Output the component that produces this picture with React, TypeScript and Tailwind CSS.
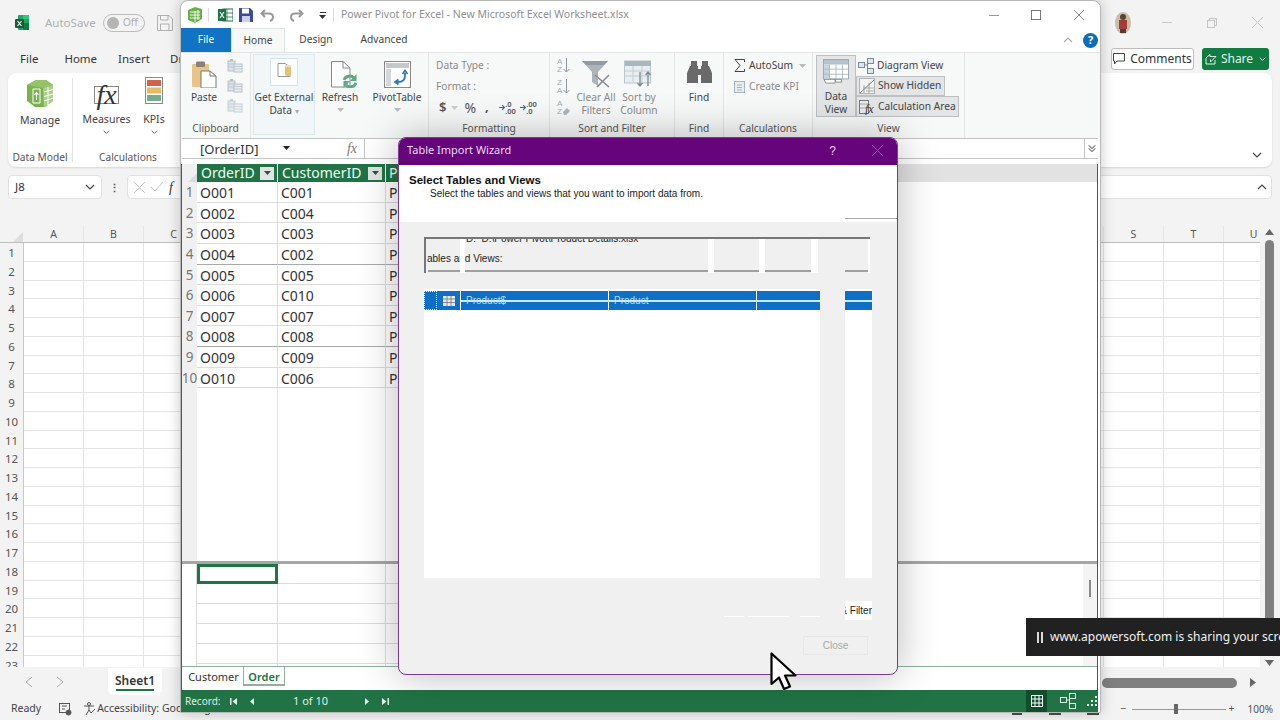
import React from "react";

const cols = ["A","B","C","D","E","F","G","H","I","J","K","L","M","N","O","P","Q","R","S","T","U"];
const rows = Array.from({ length: 23 }, (_, i) => i + 1);
const data = [
  ["O001","C001"],["O002","C004"],["O003","C003"],["O004","C002"],["O005","C005"],
  ["O006","C010"],["O007","C007"],["O008","C008"],["O009","C009"],["O010","C006"],
];
const ui = "font-['Noto_Sans','Open_Sans',sans-serif]";
const serif = "font-['Liberation_Serif',serif]";

function Chevron({ up, className = "" }: { up?: boolean; className?: string }) {
  return (
    <svg width="10" height="6" viewBox="0 0 10 6" className={className} fill="none" stroke="currentColor" strokeWidth="1.2">
      <path d={up ? "M1 5 L5 1 L9 5" : "M1 1 L5 5 L9 1"} />
    </svg>
  );
}

function Caret({ color = "#9a9a9a" }: { color?: string }) {
  return (
    <svg width="7" height="4" viewBox="0 0 7 4"><path d="M0 0 H7 L3.5 4 Z" fill={color} /></svg>
  );
}

function ExcelLogo() {
  return (
    <svg width="15" height="16" viewBox="0 0 15 16">
      <rect x="3" y="0" width="11" height="15" rx="1" fill="#21a366" />
      <rect x="8" y="0" width="6" height="4" fill="#33c481" />
      <rect x="8" y="8" width="6" height="7" fill="#107c41" />
      <rect x="0" y="4" width="9" height="9" rx="1" fill="#185c37" />
      <path d="M2.5 6 L6.5 11 M6.5 6 L2.5 11" stroke="#fff" strokeWidth="1.1" />
    </svg>
  );
}

function ManageIcon() {
  return (
    <svg width="28" height="27" viewBox="0 0 28 27">
      <path d="M1 5 L10 0 L20 0 L27 5 V21 L19 27 H9 L1 21 Z" fill="#7bb24f" />
      <path d="M1 5 L10 0 L20 0 L27 5 L17 8 Z" fill="#93c468" />
      <path d="M17 8 L27 5 V21 L18 27 Z" fill="#a9d188" />
      <path d="M18 12 L27 9.5 M18 16.5 L27 14 M18 21 L27 18 M22 7 V25 M7 9 H14 V23 H7 Z" stroke="#fff" strokeWidth="1" fill="none" />
      <path d="M10.5 20 V13 M8.5 15 L10.5 12.5 L12.5 15" stroke="#fff" strokeWidth="1.1" fill="none" />
    </svg>
  );
}

function KpiIcon() {
  return (
    <svg width="18" height="27" viewBox="0 0 18 27">
      <rect x="0.5" y="0.5" width="17" height="26" fill="#fff" stroke="#8a8a8a" />
      <rect x="2" y="3" width="14" height="6" fill="#d0614a" />
      <rect x="2" y="10.5" width="14" height="6" fill="#e6bb63" />
      <rect x="2" y="18" width="14" height="6" fill="#77ad8d" />
    </svg>
  );
}

function PPLogo() {
  return (
    <svg width="16" height="16" viewBox="0 0 16 16">
      <path d="M1 3 L8 0 L15 2 V12 L8 16 L1 13 Z" fill="#68b04a" />
      <path d="M8 4 V15 M11 3 V13 M3 5 H13 M3 8 H13 M3 11 H13" stroke="#fff" strokeWidth="0.9" />
    </svg>
  );
}

function SmallExcel() {
  return (
    <svg width="15" height="14" viewBox="0 0 15 14">
      <rect x="5" y="1" width="10" height="12" fill="#fff" stroke="#1e7145" />
      <path d="M9 1 V13 M5 5 H15 M5 9 H15" stroke="#1e7145" strokeWidth="0.8" />
      <rect x="0" y="1" width="8" height="12" fill="#1e7145" />
      <path d="M2 4 L6 10 M6 4 L2 10" stroke="#fff" strokeWidth="1.1" />
    </svg>
  );
}

function SaveIcon() {
  return (
    <svg width="14" height="14" viewBox="0 0 14 14">
      <path d="M0 0 H11 L14 3 V14 H0 Z" fill="#3b4aa0" />
      <rect x="3" y="0.5" width="7" height="5" fill="#fff" />
      <rect x="3" y="8" width="8" height="6" fill="#cfd3ea" />
    </svg>
  );
}

function Arrow({ flip }: { flip?: boolean }) {
  return (
    <svg width="15" height="13" viewBox="0 0 15 13" fill="none" stroke="#9a9a9a" strokeWidth="2" className={flip ? "-scale-x-100" : ""}>
      <path d="M5 1 L1.5 4.5 L5 8 M2 4.5 H9 Q13 4.5 13 8 Q13 11 10 12" />
    </svg>
  );
}

function PasteIcon() {
  return (
    <svg width="25" height="27" viewBox="0 0 25 27">
      <rect x="0" y="3" width="17" height="23" rx="1" fill="#e9c388" />
      <rect x="4" y="0.5" width="9" height="5.5" rx="1" fill="#8b8073" />
      <path d="M9 10 H18 L24 15 V27 H9 Z" fill="#fff" stroke="#777" />
      <path d="M18 10 V15 H24" fill="none" stroke="#777" />
    </svg>
  );
}

function TinyClip({ faded }: { faded?: boolean }) {
  return (
    <svg width="16" height="15" viewBox="0 0 16 15" className={faded ? "opacity-60" : "opacity-80"}>
      <rect x="1" y="3" width="7" height="10" fill="#d6dde3" stroke="#a8b4be" />
      <rect x="7" y="6" width="8" height="8" fill="#e6ebef" stroke="#a8b4be" />
      <rect x="3" y="1" width="3" height="2" fill="#a8b4be" />
      <path d="M7 8.5 H15 M7 11 H15 M1 6 H8 M1 9 H7" stroke="#a8b4be" strokeWidth="0.8" />
    </svg>
  );
}

function ExternalIcon() {
  return (
    <svg width="28" height="28" viewBox="0 0 28 28">
      <rect x="0.5" y="0.5" width="27" height="27" fill="#fbfcfc" stroke="#d5e4ea" />
      <path d="M8 5.5 H15 L20 9 V18.5 H8 Z" fill="#fff" stroke="#999" />
      <rect x="15" y="7" width="6" height="11" rx="2.5" fill="#e8c172" />
      <ellipse cx="18" cy="8" rx="3" ry="1.3" fill="#f4dea8" />
    </svg>
  );
}

function RefreshIcon() {
  return (
    <svg width="26" height="27" viewBox="0 0 26 27">
      <path d="M0.5 0.5 H12 L19 7 V26 H0.5 Z" fill="#fff" stroke="#888" />
      <path d="M12 0.5 V7 H19" fill="none" stroke="#888" />
      <path d="M13 19 A6 6 0 0 1 23 17 M25 22 A6 6 0 0 1 15 24" fill="none" stroke="#5eaa88" strokeWidth="3" />
      <path d="M25.5 13 V20 H19 Z M12.5 27 V20 H19 Z" fill="#5eaa88" />
    </svg>
  );
}

function PivotIcon() {
  return (
    <svg width="27" height="27" viewBox="0 0 27 27">
      <rect x="0.5" y="0.5" width="26" height="26" fill="#fff" stroke="#888" />
      <rect x="2" y="2" width="23" height="5" fill="#c6c9cc" />
      <rect x="2" y="8" width="5" height="17" fill="#d5d8da" />
      <path d="M21 12 V15 Q21 21 14 21 H12 M18.5 13 L21 9.5 L23.5 13 M14.5 18.5 L11 21 L14.5 23.5" fill="none" stroke="#2f79bd" strokeWidth="1.8" />
    </svg>
  );
}

function SortAZ({ a, b, eraser }: { a: string; b: string; eraser?: boolean }) {
  return (
    <div className="flex items-center h-[21px] gap-[1px]">
      <div className="flex flex-col text-[8px] leading-[7.5px] text-[#a2aab0] font-['Liberation_Sans',sans-serif]">
        <span>{a}</span>
        <span>{b}</span>
      </div>
      {eraser ? (
        <svg width="7" height="7" viewBox="0 0 7 7" className="mt-[7px]"><path d="M0 4 L4 0 L7 3 L3 7 H1 Z" fill="#aeb6bc" /></svg>
      ) : (
        <svg width="7" height="15" viewBox="0 0 7 15" fill="none" stroke="#8d959b" strokeWidth="1">
          <path d="M3.5 0 V14 M0.5 11 L3.5 14 L6.5 11" />
        </svg>
      )}
    </div>
  );
}

function FilterIcon() {
  return (
    <svg width="28" height="28" viewBox="0 0 28 28">
      <path d="M0 1 H26 L16 12 V26 L10 22 V12 Z" fill="#adb4b9" />
      <path d="M0 1 H26 L22 5 H4 Z" fill="#939ba1" />
      <path d="M13 15 L27 27 M27 15 L15 27" stroke="#868e94" strokeWidth="1.6" />
    </svg>
  );
}

function SortColIcon() {
  return (
    <svg width="30" height="28" viewBox="0 0 30 28">
      <rect x="0.5" y="1" width="26" height="22" fill="#e8eef2" stroke="#b9c4cc" />
      <rect x="1" y="1" width="26" height="5" fill="#a9b7c1" />
      <path d="M9 6 V23 M18 6 V23 M1 11 H27 M1 16 H27" stroke="#c4ced5" />
      <path d="M16 12 V26 M13.5 23 L16 26 L18.5 23 M24 26 V12 M21.5 15 L24 12 L26.5 15" stroke="#7d8a94" fill="none" strokeWidth="1.3" />
    </svg>
  );
}

function BinocularIcon() {
  return (
    <svg width="25" height="23" viewBox="0 0 25 23" fill="#6a6a6a">
      <rect x="4" y="0" width="6" height="5" />
      <rect x="15" y="0" width="6" height="5" />
      <path d="M3 5 H11 V22 H0 V12 Z" />
      <path d="M14 5 H22 L25 12 V22 H14 Z" />
      <rect x="11" y="8" width="3" height="6" />
    </svg>
  );
}

function DataViewIcon() {
  return (
    <svg width="28" height="27" viewBox="0 0 28 27">
      <rect x="0.5" y="0.5" width="27" height="21" fill="#fff" stroke="#9aa4ab" />
      <rect x="1" y="1" width="26" height="5" fill="#b5c3ce" />
      <rect x="1" y="6" width="6" height="16" fill="#c9d5de" />
      <path d="M7 6 V22 M14 6 V22 M21 6 V22 M1 11 H27 M1 16.5 H27" stroke="#aeb9c1" />
      <path d="M1 22 H13 V26 H3 Z M13 22 H20 V25 H14 Z" fill="#fff" stroke="#8a8a8a" />
    </svg>
  );
}

function DiagramIcon({ light }: { light?: boolean }) {
  const s = light ? "#d9efe2" : "#7a8a96";
  const f = light ? "transparent" : "#dbe6ee";
  return (
    <svg width="16" height="16" viewBox="0 0 16 16" fill={f} stroke={s}>
      <rect x="0.5" y="4.5" width="6" height="5" />
      <rect x="9.5" y="0.5" width="6" height="5" />
      <rect x="9.5" y="10.5" width="6" height="5" />
      <path d="M6.5 7 H9.5 M9.5 3 V13" fill="none" />
    </svg>
  );
}

function HiddenIcon() {
  return (
    <svg width="16" height="16" viewBox="0 0 16 16">
      <rect x="0.5" y="0.5" width="15" height="15" fill="#f2f3f4" stroke="#777" strokeDasharray="1 1" />
      <path d="M1 15 L15 2" stroke="#777" />
      <path d="M5 7 V15 M10 5 V15 M4 10 H15 M7 13 H15" stroke="#999" strokeWidth="0.8" />
    </svg>
  );
}

function CalcIcon() {
  return (
    <svg width="16" height="16" viewBox="0 0 16 16">
      <rect x="0.5" y="1.5" width="9" height="13" fill="#e6ebef" stroke="#777" />
      <path d="M0.5 5 H9 M0.5 9 H7" stroke="#999" strokeWidth="0.8" />
      <text x="6" y="14" fontSize="12" fontStyle="italic" fontFamily="Liberation Serif, serif" fill="#333">fx</text>
    </svg>
  );
}

function Cursor() {
  return (
    <svg width="28" height="40" viewBox="0 0 28 40">
      <path d="M1.5 1.5 L1.5 32 L9 25.5 L14 37 L20 34.5 L15 23.5 L25.5 23.5 Z" fill="#fff" stroke="#000" strokeWidth="2.2" strokeLinejoin="round" />
    </svg>
  );
}

function Big({ icon, label, caret, className = "", iconClass = "" }: { icon: React.ReactNode; label: React.ReactNode; caret?: boolean; className?: string; iconClass?: string }) {
  return (
    <div className={`flex flex-col items-center ${className}`}>
      <div className={`h-[35px] flex items-end justify-center ${iconClass}`}>{icon}</div>
      <div className="mt-[3px] text-center leading-[13px] text-[10.2px] text-[#444] whitespace-nowrap">{label}</div>
      {caret && <div className="mt-[4px]"><Caret color="#bbb" /></div>}
    </div>
  );
}

function Group({ w, label, children }: { w: string; label?: string; children: React.ReactNode }) {
  return (
    <div className={`${w} h-full flex flex-col border-r border-[#e2e5e6]`}>
      <div className="flex-1 flex min-h-0">{children}</div>
      <div className="h-[14px] text-center text-[10.2px] leading-[14px] text-[#555] shrink-0 mb-[3px]">{label}</div>
    </div>
  );
}

function Decimal({ top, bottom }: { top: string; bottom: string }) {
  return (
    <div className="flex items-center w-[17px]">
      <svg width="7" height="7" viewBox="0 0 7 7" fill="none" stroke="#2f6ea8" strokeWidth="1.2"><path d="M0 3.5 H6 M3.5 1 L6 3.5 L3.5 6" /></svg>
      <span className="text-[7.5px] leading-[7px] font-semibold text-[#555]">{top}<br />{bottom}</span>
    </div>
  );
}

function PowerPivot() {
  return (
    <div className={`absolute left-[180px] top-0 w-[921px] h-[713px] bg-white rounded-t-lg border border-[#b8b8b8] flex flex-col shadow-[0_0_14px_rgba(0,0,0,0.22)] ${ui}`}>
      {/* title bar */}
      <div className="h-[27px] shrink-0 flex items-center pl-[6px] pr-[15px] pt-[1px]">
        <PPLogo />
        <div className="w-px h-[14px] bg-[#ddd] ml-[5px] mr-[9px]" />
        <SmallExcel />
        <div className="ml-[6px]"><SaveIcon /></div>
        <div className="ml-[7px]"><Arrow /></div>
        <div className="ml-[14px]"><Arrow flip /></div>
        <div className="ml-[15px] flex flex-col items-center gap-[2px]">
          <div className="w-[6px] h-[1px] bg-[#333]" />
          <Caret color="#333" />
        </div>
        <div className="w-px h-[14px] bg-[#ddd] ml-[7px] mr-[7px]" />
        <div className="text-[10.5px] text-[#8f8f8f] whitespace-nowrap">Power Pivot for Excel - New Microsoft Excel Worksheet.xlsx</div>
        <div className="ml-auto flex items-center gap-[31px] text-[#888]">
          <div className="w-[10px] h-px bg-[#999]" />
          <div className="w-[10px] h-[10px] border border-[#777] ml-[1px]" />
          <svg width="12" height="12" viewBox="0 0 12 12" stroke="#888" className="ml-[1px]"><path d="M1 1 L11 11 M11 1 L1 11" /></svg>
        </div>
      </div>
      {/* tabs */}
      <div className="h-[24px] shrink-0 flex items-stretch text-[10.2px] text-[#444]">
        <div className="w-[50px] bg-[#1272c4] text-white flex items-center justify-center">File</div>
        <div className="w-[54px] flex items-center justify-center bg-[#f7f8f8] border-x border-t border-[#dfe3e5]">Home</div>
        <div className="w-[62px] flex items-center justify-center">Design</div>
        <div className="w-[74px] flex items-center justify-center">Advanced</div>
        <div className="ml-auto flex items-center gap-[10px] pr-[2px] text-[#aaa]">
          <Chevron up />
          <div className="w-[15px] h-[15px] rounded-full bg-[#0f6cbd] text-white text-[11px] font-bold flex items-center justify-center">?</div>
        </div>
      </div>
      {/* ribbon */}
      <div className="h-[86px] shrink-0 bg-[#f7f8f8] border-t border-[#e2e5e6] flex">
        <Group w="w-[70px]" label="Clipboard">
          <Big icon={<PasteIcon />} label="Paste" className="w-[46px]" />
          <div className="mt-[5px] flex flex-col gap-[5px]"><TinyClip /><TinyClip /><TinyClip faded /></div>
        </Group>
        <Group w="w-[178px]">
          <div className="w-[62px] h-[81px] ml-[2px] mt-[1px] bg-[#f1f6f8] border border-[#dde8ec] flex flex-col items-center pt-[3px] shrink-0">
            <ExternalIcon />
            <div className="mt-[5px] text-center leading-[13px] text-[10.2px] text-[#444] whitespace-nowrap">
              Get External<br />Data <span className="text-[#aaa] text-[8px]">▾</span>
            </div>
          </div>
          <Big icon={<div className="ml-[8px]"><RefreshIcon /></div>} label="Refresh" caret className="w-[50px] shrink-0" />
          <Big icon={<PivotIcon />} label="PivotTable" caret className="w-[64px] shrink-0" />
        </Group>
        <Group w="w-[121px]" label="Formatting">
          <div className="pl-[7px] mt-[2px] text-[10.2px] text-[#8a8a8a] flex flex-col">
            <div className="h-[21px] flex items-center whitespace-nowrap">Data Type :</div>
            <div className="h-[21px] flex items-center">Format :</div>
            <div className="h-[21px] flex items-center text-[#555]">
              <span className="ml-[3px] text-[13px] font-semibold">$</span>
              <span className="ml-[5px]"><Caret color="#ccc" /></span>
              <span className="ml-[6px] text-[14px]">%</span>
              <span className="ml-[9px] text-[13px] font-bold leading-[8px] h-[12px]">,</span>
              <span className="ml-[10px]"><Decimal top=".0" bottom=".00" /></span>
              <span className="ml-[4px]"><Decimal top=".00" bottom=".0" /></span>
            </div>
          </div>
        </Group>
        <Group w="w-[125px]" label="Sort and Filter">
          <div className="ml-[7px] mt-[2px] w-[17px] shrink-0 flex flex-col"><SortAZ a="A" b="Z" /><SortAZ a="Z" b="A" /><SortAZ a="A" b="Z" eraser /></div>
          <Big icon={<FilterIcon />} label={<span className="text-[#8a8a8a]">Clear All<br />Filters</span>} className="w-[44px] shrink-0" />
          <Big icon={<SortColIcon />} label={<span className="text-[#8a8a8a]">Sort by<br />Column</span>} className="w-[42px] shrink-0" />
        </Group>
        <Group w="w-[49px]" label="Find">
          <Big icon={<BinocularIcon />} label="Find" className="w-full" iconClass="pb-[4px]" />
        </Group>
        <Group w="w-[89px]" label="Calculations">
          <div className="pl-[10px] mt-[2px] flex flex-col text-[10.2px]">
            <div className="h-[21px] flex items-center text-[#444]">
              <svg width="11" height="13" viewBox="0 0 11 13" fill="none" stroke="#444"><path d="M10.5 3 V0.5 H1 L6 6.5 L1 12.5 H10.5 V10" /></svg>
              <span className="ml-[4px] mr-[6px]">AutoSum</span><Caret color="#bbb" />
            </div>
            <div className="h-[21px] flex items-center text-[#8a8a8a]">
              <svg width="11" height="13" viewBox="0 0 11 13"><rect x="0.5" y="1.5" width="10" height="11" fill="#e8edf0" stroke="#a8b4be" /><path d="M3 5 H8 M3 7.5 H8 M3 10 H8" stroke="#a8b4be" /></svg>
              <span className="ml-[4px] whitespace-nowrap">Create KPI</span>
            </div>
          </div>
        </Group>
        <Group w="w-[152px]" label="View">
          <div className="ml-[3px] mt-[2px] w-[40px] h-[62px] shrink-0 bg-[#e3e5e6] border border-[#bdbfc0] flex flex-col items-center pt-[3px]">
            <DataViewIcon />
            <div className="mt-[6px] text-center leading-[13px] text-[10.2px] text-[#444]">Data<br />View</div>
          </div>
          <div className="mt-[3px] flex flex-col items-start text-[10.2px] text-[#444] whitespace-nowrap">
            <div className="h-[20px] flex items-center gap-[3px] pl-[2px]"><DiagramIcon />Diagram View</div>
            <div className="h-[20px] w-[89px] flex items-center gap-[3px] pl-[2px] bg-[#e3e5e6] border border-[#bdbfc0]"><HiddenIcon />Show Hidden</div>
            <div className="h-[21px] w-[103px] flex items-center gap-[3px] pl-[2px] bg-[#e3e5e6] border border-[#bdbfc0]"><CalcIcon />Calculation Area</div>
          </div>
        </Group>
      </div>
      {/* formula bar */}
      <div className="h-[21px] shrink-0 flex items-stretch border-y border-[#c4c4c4] ml-px mr-[2px] bg-white">
        <div className="w-[108px] pl-[18px] flex items-center justify-between text-[13px] text-[#333] shrink-0 leading-[18px]">
          [OrderID]<span className="mb-[1px]"><Caret color="#222" /></span>
        </div>
        <div className="w-[55px] shrink-0" />
        <div className={`w-[14px] shrink-0 flex items-center justify-center italic text-[14px] text-[#777] ${serif}`}>fx</div>
        <div className="ml-[5px] w-[1px] bg-[#c4c4c4]" />
        <div className="flex-1" />
        <div className="w-[14px] border-l border-[#c4c4c4] flex flex-col items-center justify-center -space-y-[3px]">
          <Chevron className="text-[#222] w-[8px]" />
          <Chevron className="text-[#222] w-[8px]" />
        </div>
      </div>
      {/* data pane */}
      <div className="flex-1 min-h-0 flex flex-col mt-[5px] mr-[2px] border-x border-[#217346] text-[14px]">
        <div className="flex h-[18px] shrink-0 leading-[18px]">
          <div className="w-[15px] bg-[#f0f0f0] flex items-end justify-end">
            <svg width="9" height="9" viewBox="0 0 9 9"><path d="M9 0 V9 H0 Z" fill="#dcdcdc" /></svg>
          </div>
          <div className="w-[81px] bg-[#217346] text-[#eafff3] flex items-center pl-[4px] border-r border-white">OrderID<span className="ml-auto mr-[3px] w-[14px] h-[13px] bg-[#dfe5e2] flex items-center justify-center"><Caret color="#444" /></span></div>
          <div className="w-[108px] bg-[#217346] text-[#eafff3] flex items-center pl-[4px] border-r border-white">CustomerID<span className="ml-auto mr-[3px] w-[14px] h-[13px] bg-[#dfe5e2] flex items-center justify-center"><Caret color="#444" /></span></div>
          <div className="flex-1 bg-[#e2e2e2] flex"><span className="w-[14px] h-full bg-[#217346] text-[#eafff3] pl-[3px]">P</span></div>
        </div>
        <div className="flex-1 min-h-0 flex flex-col">
          {data.map((r, i) => (
            <div key={r[0]} className="flex h-[20.65px] shrink-0 text-[#333] leading-[21px]">
              <div className="w-[15px] shrink-0 bg-[#f0f0f0] text-[#777] text-[13.5px] flex justify-center whitespace-nowrap">{i + 1}</div>
              <div className={`w-[81px] shrink-0 border-r border-b border-r-[#dcdcdc] pl-[3px] ${i === 3 || i === 7 ? "border-b-[#a9a9a9]" : "border-b-[#dcdcdc]"}`}>{r[0]}</div>
              <div className={`w-[108px] shrink-0 border-r border-b border-r-[#dcdcdc] pl-[3px] ${i === 3 || i === 7 ? "border-b-[#a9a9a9]" : "border-b-[#dcdcdc]"}`}>{r[1]}</div>
              <div className={`w-[14px] shrink-0 border-b pl-[3px] ${i === 3 || i === 7 ? "border-b-[#a9a9a9]" : "border-b-[#dcdcdc]"}`}>P</div>
            </div>
          ))}
          <div className="flex-1 flex">
            <div className="w-[15px] bg-[#f0f0f0]" />
            <div className="w-[81px] border-r border-[#e6e6e6]" />
            <div className="w-[108px] border-r border-[#e6e6e6]" />
          </div>
        </div>
        <div className="h-[3px] shrink-0 bg-[#a6a6a6]" />
        <div className="h-[103px] shrink-0 flex border-b border-[#8fb09e]">
          <div className="w-[15px] border-r border-[#dcdcdc]" />
          <div className="w-[81px] flex flex-col border-r border-[#dcdcdc]">
            <div className="h-[20px] border-[3px] border-[#217346] shrink-0 -mr-px" />
            {[0,1,2,3].map((k) => <div key={k} className="h-[20px] border-b border-[#dcdcdc]" />)}
          </div>
          <div className="w-[108px] flex flex-col border-r border-[#dcdcdc]">
            {[0,1,2,3,4].map((k) => <div key={k} className="h-[20px] border-b border-[#dcdcdc]" />)}
          </div>
          <div className="w-[14px] flex flex-col">
            {[0,1,2,3,4].map((k) => <div key={k} className="h-[20px] border-b border-[#dcdcdc]" />)}
          </div>
          <div className="flex-1" />
          <div className="w-[14px] bg-[#f4f4f4] flex items-start justify-center pt-[16px]">
            <div className="w-[2px] h-[17px] bg-[#8a8a8a]" />
          </div>
        </div>
        <div className="h-[23px] shrink-0 flex items-start pl-[2px] text-[11px] leading-[14px]">
          <div className="w-[60px] h-[19px] pt-[3px] text-center text-[#333] border-r border-[#8fb09e] bg-white">Customer</div>
          <div className="w-[41px] h-[19px] pt-[3px] text-center text-[#217346] font-semibold border-b-2 border-r border-[#8fb09e]">Order</div>
        </div>
      </div>
      {/* record bar */}
      <div className="h-[22px] shrink-0 bg-[#217346] flex items-center text-[#dff0e6] text-[10px] mr-[2px] pl-[4px]">
        <span className="w-[35px] whitespace-nowrap">Record:</span>
        <svg width="7" height="7" viewBox="0 0 7 7" fill="#dff0e6" className="ml-[10px]"><rect width="1.5" height="7" /><path d="M7 0 V7 L2.5 3.5 Z" /></svg>
        <svg width="4" height="7" viewBox="0 0 4 7" fill="#dff0e6" className="ml-[13px]"><path d="M4 0 V7 L0 3.5 Z" /></svg>
        <span className="ml-[39px] w-[32px] text-[11px] whitespace-nowrap">1 of 10</span>
        <svg width="4" height="7" viewBox="0 0 4 7" fill="#dff0e6" className="ml-[40px]"><path d="M0 0 V7 L4 3.5 Z" /></svg>
        <svg width="7" height="7" viewBox="0 0 7 7" fill="#dff0e6" className="ml-[13px]"><path d="M0 0 V7 L4.5 3.5 Z" /><rect x="5.5" width="1.5" height="7" /></svg>
        <div className="ml-auto flex items-center">
          <div className="w-[21px] h-[22px] bg-[#0f4d2b] flex items-center justify-center">
            <svg width="12" height="12" viewBox="0 0 12 12" fill="none" stroke="#fff" strokeWidth="1"><rect x="0.5" y="0.5" width="11" height="11" /><path d="M4 0 V12 M8 0 V12 M0 4 H12 M0 8 H12" /></svg>
          </div>
          <div className="ml-[13px]"><DiagramIcon light /></div>
          <svg width="12" height="12" viewBox="0 0 12 12" className="ml-[10px]" fill="#d9efe2"><rect x="9" y="9" width="2" height="2" /><rect x="5" y="9" width="2" height="2" /><rect x="1" y="9" width="2" height="2" /><rect x="9" y="5" width="2" height="2" /><rect x="5" y="5" width="2" height="2" /><rect x="9" y="1" width="2" height="2" /></svg>
        </div>
      </div>
    </div>
  );
}

const segments = [[2, 32], [39, 243], [286, 47], [339, 47], [419, 23]];
const strips = [[34, 5], [282, 6], [333, 6], [385, 7], [442, 3]];

function Dialog() {
  return (
    <div className="absolute left-[398px] top-[137px] w-[500px] h-[538px] bg-[#f0f0f0] rounded-t-lg rounded-b-lg border border-[#7a3b8c] overflow-hidden flex flex-col shadow-[0_0_40px_rgba(0,0,0,0.28)] font-['Liberation_Sans',sans-serif]">
      <div className="h-[27px] shrink-0 bg-[#66047c] flex items-center pl-[8px] pr-[14px] pb-[2px] text-[11px] text-[#edd9f1]">
        <span className={ui}>Table Import Wizard</span>
        <span className="ml-auto mr-[36px] text-[#f0c8f4] text-[12px]">?</span>
        <svg width="11" height="11" viewBox="0 0 11 11" stroke="#8f4ea0"><path d="M0 0 L11 11 M11 0 L0 11" /></svg>
      </div>
      <div className="h-[57px] shrink-0 bg-white relative pl-[10px] pt-[9px]">
        <div className="text-[11.5px] leading-[13px] font-bold text-[#111]">Select Tables and Views</div>
        <div className="text-[10px] leading-[13px] text-[#222] pl-[21px]">Select the tables and views that you want to import data from.</div>
        <div className="absolute right-0 bottom-[3px] w-[52px] h-px bg-[#a8a8a8]" />
      </div>
      <div className="flex-1 min-h-0 flex flex-col pl-[25px]">
        {/* source box */}
        <div className="mt-[15px] w-[446px] h-[36px] shrink-0 relative border-t-2 border-l-2 border-[#777] overflow-hidden">
          <div className="pl-[40px] -mt-[7px] text-[10px] leading-[13px] text-[#222] whitespace-nowrap">D:&nbsp; D:\Power Pivot\Product Details.xlsx</div>
          <div className="pl-[1px] mt-[7px] text-[10px] leading-[13px] text-[#222] whitespace-nowrap">ables and Views:</div>
          {segments.map(([x, w]) => (
            <div key={x} style={{ left: x, width: w }} className="absolute bottom-[1px] h-[2px] bg-[#a0a0a0]" />
          ))}
          {strips.map(([x, w]) => (
            <div key={x} style={{ left: x, width: w }} className="absolute top-0 bottom-0 bg-white" />
          ))}
        </div>
        {/* lists */}
        <div className="mt-[16px] h-[289px] flex shrink-0">
          <div className="w-[396px] bg-white pt-[2px] flex flex-col">
            <div className="h-[19px] bg-[#0f6fc6] flex text-[10px] text-[#b9dcf4] relative">
              <div className="w-[13px] border border-dotted border-white" />
              <div className="w-[24px] border-r border-white flex items-center justify-center">
                <svg width="12" height="10" viewBox="0 0 12 10" fill="#e8e8e8"><rect width="12" height="10" /><path d="M4 0 V10 M8 0 V10 M0 3 H12 M0 6.5 H12" stroke="#666" strokeWidth="0.7" /></svg>
              </div>
              <div className="w-[148px] border-r border-white pl-[5px] leading-[19px]">Product$</div>
              <div className="w-[148px] border-r border-white pl-[5px] leading-[19px]">Product</div>
              <div className="absolute left-[37px] right-0 top-[9px] h-[2px] bg-[#c7ecf6]" />
            </div>
          </div>
          <div className="w-[25px]" />
          <div className="w-[27px] bg-white pt-[2px]">
            <div className="h-[19px] bg-[#0f6fc6] relative"><div className="absolute inset-x-0 top-[9px] h-[2px] bg-[#c7ecf6]" /></div>
          </div>
        </div>
        {/* footer */}
        <div className="mt-[23px] h-[19px] shrink-0 flex items-end">
          <div className="ml-[300px] w-[20px] h-px bg-white mb-[3px]" />
          <div className="ml-[4px] w-[41px] h-px bg-white mb-[3px]" />
          <div className="ml-[11px] w-[20px] h-px bg-white mb-[3px]" />
          <div className="ml-[25px] w-[27px] h-[19px] bg-white overflow-hidden flex items-center justify-end text-[10px] whitespace-nowrap text-[#222]"><span>&amp; Filter</span></div>
        </div>
        <div className="mt-[16px] ml-[379px] w-[65px] h-[19px] shrink-0 border border-[#e8e8e8] text-[10px] text-[#a8a8a8] flex items-center justify-center">Close</div>
      </div>
    </div>
  );
}

export default function App() {
  return (
    <div className={`relative w-[1280px] h-[720px] overflow-hidden bg-[#f3f3f3] flex flex-col ${ui}`}>
      {/* Excel title bar */}
      <div className="h-[45px] shrink-0 flex items-center pl-[15px] pr-[17px] text-[11.5px] text-[#b0b0b0]">
        <ExcelLogo />
        <span className="ml-[15px]">AutoSave</span>
        <div className="ml-[7px] w-[42px] h-[18px] rounded-full border border-[#bdbdbd] flex items-center pl-[3px] gap-[4px] text-[10.5px]">
          <span className="w-[12px] h-[12px] rounded-full bg-[#b5b5b5]" />Off
        </div>
        <svg width="16" height="16" viewBox="0 0 16 16" className="ml-[12px]" fill="none" stroke="#b0b0b0"><path d="M0.5 0.5 H12 L15.5 4 V15.5 H0.5 Z M3.5 0.5 V5 H11 V0.5 M3.5 15.5 V9 H12 V15.5" /></svg>
        <div className="ml-auto flex items-center">
          <svg width="18" height="24" viewBox="0 0 18 24"><ellipse cx="9" cy="12" rx="8" ry="11" fill="#c9bfa8" /><rect x="5" y="9" width="8" height="9" fill="#a83a3a" /><rect x="6" y="18" width="6" height="4" fill="#4a4036" /><circle cx="9" cy="6" r="3" fill="#5c4334" /></svg>
          <div className="ml-[30px] w-[10px] h-px bg-[#c8c8c8]" />
          <svg width="10" height="10" viewBox="0 0 10 10" className="ml-[35px]" fill="none" stroke="#c4c4c4"><rect x="0.5" y="2.5" width="7" height="7" /><path d="M2.5 2.5 V0.5 H9.5 V7.5 H7.5" /></svg>
          <svg width="11" height="11" viewBox="0 0 11 11" className="ml-[35px]" stroke="#c4c4c4"><path d="M0 0 L11 11 M11 0 L0 11" /></svg>
        </div>
      </div>
      {/* Excel tabs */}
      <div className="h-[28px] shrink-0 flex items-center pl-[20px] pr-[11px] text-[11.5px] text-[#333]">
        <span>File</span>
        <span className="ml-[26px]">Home</span>
        <span className="ml-[21px]">Insert</span>
        <span className="ml-[20px]">Dr</span>
        <div className="ml-auto flex items-center gap-[8px] text-[12px]">
          <div className="w-[83px] h-[22px] bg-white border border-[#bdbdbd] rounded-[3px] flex items-center justify-center gap-[5px]">
            <svg width="12" height="12" viewBox="0 0 12 12" fill="none" stroke="#444"><path d="M0.5 0.5 H11.5 V8 H4 L1.5 11 V8 H0.5 Z" /></svg>
            Comments
          </div>
          <div className="w-[67px] h-[22px] bg-[#107c41] rounded-[3px] text-[#e6f4ec] flex items-center justify-center gap-[4px]">
            <svg width="12" height="12" viewBox="0 0 12 12" fill="none" stroke="#e6f4ec"><path d="M1 5 V11 H10 V7 M1 5 L5 1.5 V3.5 H11 L5.5 9 V6.5" /></svg>
            Share
            <Chevron className="w-[7px] ml-[2px]" />
          </div>
        </div>
      </div>
      {/* Excel ribbon */}
      <div className="h-[94px] shrink-0 mx-[8px] rounded-lg bg-white shadow-[0_1px_2px_rgba(0,0,0,0.12)] flex text-[10.5px] text-[#444] relative">
        <div className="w-[65px] flex flex-col items-center border-r border-[#e3e3e3] my-[5px]">
          <div className="mt-[2px]"><ManageIcon /></div>
          <div className="mt-[6px] leading-[14px]">Manage</div>
          <div className="mt-auto text-[10.2px] leading-[13px] -mb-[2px] whitespace-nowrap text-[#555]">Data Model</div>
        </div>
        <div className="w-[110px] flex flex-col my-[5px]">
          <div className="flex pl-[10px]">
            <div className="flex flex-col items-center w-[47px]">
              <div className="h-[26px] flex items-end">
                <div className={`w-[25px] h-[18px] border border-[#888] bg-white flex items-center justify-center italic ${serif} text-[28px] leading-[18px] text-[#333]`}>fx</div>
              </div>
              <div className="mt-[8px] leading-[14px]">Measures</div>
              <Chevron className="mt-[3px] w-[7px]" />
            </div>
            <div className="flex flex-col items-center ml-[13px] w-[22px]">
              <div className="h-[26px] flex items-end"><KpiIcon /></div>
              <div className="mt-[8px] leading-[14px]">KPIs</div>
              <Chevron className="mt-[3px] w-[7px]" />
            </div>
          </div>
          <div className="mt-auto text-[10.2px] text-center leading-[13px] -mb-[2px] text-[#555]">Calculations</div>
        </div>
        <div className="absolute right-[10px] bottom-[9px] text-[#444]"><Chevron /></div>
      </div>
      {/* Excel formula bar */}
      <div className="h-[24px] mt-[8px] shrink-0 flex items-center mx-[8px] gap-[7px]">
        <div className="w-[94px] h-full bg-white border border-[#e1e1e1] rounded-[4px] flex items-center px-[6px] text-[11.5px] text-[#333] justify-between">J8<Chevron className="text-[#444]" /></div>
        <div className="text-[#555] text-[11px] font-bold leading-none">⋮</div>
        <div className="flex-1 h-full bg-white border border-[#e1e1e1] rounded-[4px] flex items-center pl-[6px] pr-[4px] gap-[6px]">
          <svg width="11" height="11" viewBox="0 0 11 11" stroke="#c4c4c4"><path d="M0 0 L11 11 M11 0 L0 11" /></svg>
          <svg width="12" height="10" viewBox="0 0 12 10" fill="none" stroke="#c4c4c4"><path d="M0 5 L4 9 L12 0" /></svg>
          <span className={`italic text-[14px] text-[#333] ${serif}`}>f</span>
          <span className="ml-auto text-[#444]"><Chevron up /></span>
        </div>
      </div>
      {/* Excel grid */}
      <div className="flex-1 min-h-0 flex mt-[27px]">
        <div className="flex-1 min-w-0 overflow-hidden flex flex-col">
          <div className="h-[17px] shrink-0 flex border-b border-[#bdbdbd] text-[10.5px] text-[#555]">
            <div className="w-[24px] shrink-0 flex items-end justify-end pr-[1px]"><svg width="10" height="10" viewBox="0 0 10 10"><path d="M10 0 V10 H0 Z" fill="#dedede" /></svg></div>
            {cols.map((c) => (
              <div key={c} className="w-[60px] shrink-0 text-center leading-[17px] border-r border-[#e6e6e6]">{c}</div>
            ))}
          </div>
          {rows.map((r) => (
            <div key={r} className="h-[18.75px] shrink-0 flex text-[11.5px] text-[#555]">
              <div className="w-[24px] shrink-0 text-center leading-[19px] border-r border-[#c8c8c8]">{r}</div>
              <div className="flex border-b border-[#e4e4e4] bg-white">
                {cols.map((c) => (
                  <div key={c} className="w-[60px] shrink-0 border-r border-[#e4e4e4]" />
                ))}
              </div>
            </div>
          ))}
        </div>
        <div className="w-[20px] shrink-0 flex flex-col items-center pr-[1px]">
          <svg width="9" height="6" viewBox="0 0 9 6" className="mt-[3px]"><path d="M4.5 0 L9 6 H0 Z" fill="#666" /></svg>
          <div className="w-[9px] h-[405px] mt-[5px] rounded-full bg-[#7f7f7f] shrink-0" />
          <svg width="9" height="6" viewBox="0 0 9 6" className="mt-[15px]"><path d="M0 0 H9 L4.5 6 Z" fill="#666" /></svg>
        </div>
      </div>
      {/* sheet tabs */}
      <div className="h-[29px] shrink-0 flex items-center pl-[25px] bg-[#f3f3f3]">
        <svg width="8" height="12" viewBox="0 0 8 12" fill="none" stroke="#aaa"><path d="M7 1 L1 6 L7 11" /></svg>
        <svg width="8" height="12" viewBox="0 0 8 12" fill="none" stroke="#aaa" className="ml-[23px]"><path d="M1 1 L7 6 L1 11" /></svg>
        <div className="ml-[44px] w-[54px] h-[27px] bg-white rounded-b-md text-[12px] font-semibold text-[#333] flex flex-col items-center justify-center">
          <span className="leading-[16px]">Sheet1</span>
          <span className="w-[38px] h-[2px] bg-[#217346]" />
        </div>
        <div className="ml-auto flex items-center mr-[24px] mt-[2px]">
          <div className="w-[135px] h-[10px] rounded-full bg-[#7f7f7f]" />
          <svg width="6" height="9" viewBox="0 0 6 9" className="ml-[13px]"><path d="M0 0 L6 4.5 L0 9 Z" fill="#666" /></svg>
        </div>
      </div>
      {/* status bar */}
      <div className="h-[24px] shrink-0 flex items-center pl-[11px] pr-[7px] pt-[2px] text-[10.5px] text-[#444] bg-[#f3f3f3]">
        <span>Ready</span>
        <svg width="13" height="13" viewBox="0 0 13 13" className="ml-[18px]" fill="none" stroke="#555"><rect x="0.5" y="0.5" width="10" height="9" /><path d="M3 3 H8 M3 6 H6" /><circle cx="9.5" cy="9.5" r="2.5" fill="#555" /></svg>
        <svg width="14" height="14" viewBox="0 0 14 14" className="ml-[10px]" fill="none" stroke="#555"><circle cx="7" cy="2" r="1.5" /><path d="M2 4 H12 M7 4 V8 L4 13 M7 8 L9 11 L13 7" /></svg>
        <span className="ml-[1px]">Accessibility: Good to go</span>
        <div className="ml-auto flex items-center text-[#555]">
          <span>−</span>
          <div className="ml-[5px] w-[94px] h-px bg-[#999] flex items-center justify-center">
            <div className="w-[4px] h-[10px] bg-[#666] shrink-0 -ml-[5px]" />
          </div>
          <span className="ml-[3px]">+</span>
          <span className="ml-[13px] text-[10px]">100%</span>
        </div>
      </div>

      <PowerPivot />
      <Dialog />

      {/* underlying status marks */}
      <div className="absolute left-[1012px] top-[713px] w-[10px] h-[2px] bg-[#444]" />
      <div className="absolute left-[1049px] top-[713px] w-[12px] h-[2px] bg-[#444]" />
      <div className="absolute left-[1087px] top-[713px] w-[12px] h-[2px] bg-[#444]" />

      {/* sharing notice */}
      <div className="absolute left-[1026px] top-[618px] w-[300px] h-[38px] bg-[#212121] text-[#f2f2f2] text-[12px] flex items-center pl-[11px] whitespace-nowrap">
        <svg width="6" height="11" viewBox="0 0 6 11" fill="#d8d8d8" className="mr-[7px]"><rect width="2" height="11" /><rect x="4" width="2" height="11" /></svg>
        www.apowersoft.com is sharing your screen.
      </div>

      <div className="absolute left-[770px] top-[652px]"><Cursor /></div>
    </div>
  );
}
